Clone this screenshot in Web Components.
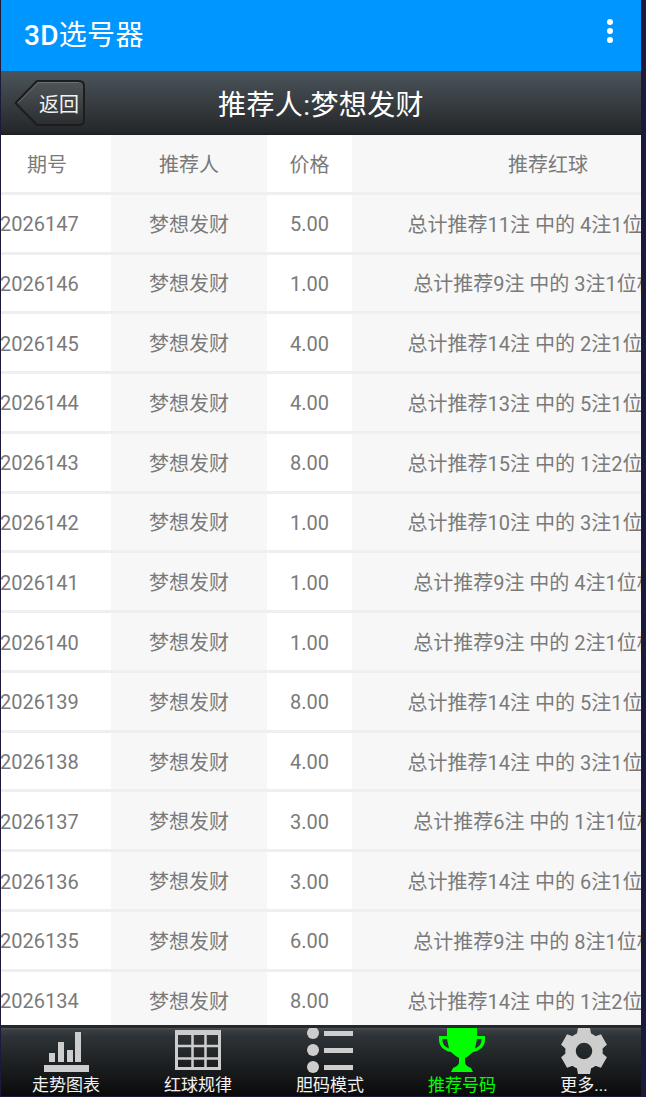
<!DOCTYPE html>
<html>
<head>
<meta charset="utf-8">
<title>3D选号器</title>
<style>
  html, body { margin: 0; height: 100%; background: #1b1a3a; overflow: hidden; }
  body { font-family: Roboto, "Noto Sans CJK SC", sans-serif; }
  lotto-app { height: 1097px; }
</style>
</head>
<body>
<lotto-app>
  <lotto-appbar slot="top">选号器</lotto-appbar>
  <lotto-subbar slot="top">推荐人:梦想发财</lotto-subbar>
  <record-table></record-table>
  <tab-bar slot="bottom">
    <tab-item label="走势图表">
      <svg width="46" height="46" viewBox="0 0 46 46" fill="#cdcdcd">
        <rect x="1" y="37" width="45" height="7"/>
        <rect x="6" y="25" width="6" height="9"/>
        <rect x="15" y="14" width="6" height="20"/>
        <rect x="24" y="22" width="6" height="12"/>
        <rect x="32" y="4" width="6" height="30"/>
      </svg>
    </tab-item>
    <tab-item label="红球规律">
      <svg width="46" height="46" viewBox="0 0 46 46" fill="none" stroke="#cdcdcd">
        <rect x="1.500" y="3.500" width="43" height="37" stroke-width="3"/>
        <path d="M2 5.500H44" stroke-width="3"/>
        <path d="M17.500 4V41M30.500 4V41M2 18H44M2 30.500H44" stroke-width="2.500"/>
      </svg>
    </tab-item>
    <tab-item label="胆码模式">
      <svg width="46" height="46" viewBox="0 0 46 46" fill="#cdcdcd">
        <circle cx="6" cy="5" r="6"/>
        <circle cx="6" cy="22" r="6"/>
        <circle cx="6" cy="39" r="6"/>
        <rect x="17" y="3" width="29" height="5"/>
        <rect x="17" y="20" width="29" height="5"/>
        <rect x="17" y="37" width="29" height="5"/>
      </svg>
    </tab-item>
    <tab-item label="推荐号码" active>
      <svg width="46" height="46" viewBox="0 0 46 46">
        <path d="M8 0H38V8H46V12C46 18 41 23 34 24C31 27 28 29 26 30V35C27 38 30 39 32 40L34 44H12L14 40C16 39 19 38 20 35V30C18 29 15 27 12 24C5 23 0 18 0 12V8H8ZM8 11H3.500V12C3.500 16 6 19 10 20.500ZM38 11L36 20.500C40 19 42.500 16 42.500 12V11Z" fill="#00ff00" fill-rule="evenodd"/>
      </svg>
    </tab-item>
    <tab-item label="更多...">
      <svg width="46" height="46" viewBox="-23 -23 46 46" fill="#cdcdcd">
        <path d="M-6 -23H6L8 -12H-8Z"/>
        <path d="M-6 -23H6L8 -12H-8Z" transform="rotate(60)"/>
        <path d="M-6 -23H6L8 -12H-8Z" transform="rotate(120)"/>
        <path d="M-6 -23H6L8 -12H-8Z" transform="rotate(180)"/>
        <path d="M-6 -23H6L8 -12H-8Z" transform="rotate(240)"/>
        <path d="M-6 -23H6L8 -12H-8Z" transform="rotate(300)"/>
        <circle r="13.500" fill="none" stroke="#cdcdcd" stroke-width="10.500"/>
      </svg>
    </tab-item>
  </tab-bar>
</lotto-app>

<script>
/* Outer frame: fixed bars on top and bottom, clipped content between */
class LottoApp extends HTMLElement {
  constructor() {
    super()
    this.attachShadow({ mode: 'open' })
    this.shadowRoot.innerHTML = `
      <style>
        :host { display: flex; flex-direction: column; width: 640px; margin-left: 1px; }
        main { flex: 1; min-height: 0; overflow: hidden; background: #fff; }
      </style>
      <slot name="top"></slot>
      <main><slot></slot></main>
      <slot name="bottom"></slot>`
  }
}

class LottoAppbar extends HTMLElement {
  constructor() {
    super()
    this.attachShadow({ mode: 'open' })
    this.shadowRoot.innerHTML = `
      <style>
        :host {
          display: flex; align-items: center; justify-content: space-between;
          height: 71px; box-sizing: border-box; padding: 0 28px 9px 23px;
          background: #0096ff; color: #fff; font-size: 28px;
        }
        .name { padding-top: 4px; letter-spacing: .3px; }
        b { font-weight: 500; }
        .dots { display: flex; flex-direction: column; gap: 2.6px; }
        .dots i { width: 6px; height: 6px; border-radius: 50%; background: #fff; }
      </style>
      <span class="name"><b>3D</b><slot></slot></span>
      <div class="dots"><i></i><i></i><i></i></div>`
  }
}

class LottoSubbar extends HTMLElement {
  constructor() {
    super()
    this.attachShadow({ mode: 'open' })
    this.shadowRoot.innerHTML = `
      <style>
        :host {
          display: grid; grid-template-columns: 1fr auto 1fr; align-items: center;
          height: 64px; box-sizing: border-box;
          background: linear-gradient(#4b555b, #25272a 95%, #1d1e20);
          color: #fff; font-size: 28px;
        }
        .back {
          position: relative; width: 72px; height: 48px; margin-left: 13px;
          display: flex; align-items: center; justify-content: flex-end;
          box-sizing: border-box; padding: 0 7px 0 0; font-size: 20px; color: #f2f2f2;
        }
        .back svg { position: absolute; left: 0; top: 0; }
        .back span { position: relative; }
        .title { letter-spacing: .4px; }
      </style>
      <div class="back">
        <svg width="72" height="48" viewBox="0 0 72 48">
          <defs>
            <linearGradient id="bk" x1="0" y1="0" x2="0" y2="1">
              <stop offset="0" stop-color="#4f565a"/>
              <stop offset="1" stop-color="#2b2d2f"/>
            </linearGradient>
          </defs>
          <path d="M1.500 24L23 2H65Q70 2 70 7V41Q70 46 65 46H23Z" fill="url(#bk)" stroke="#1b1d1e" stroke-width="2" stroke-linejoin="round"/>
          <path d="M4 24L24 3.500H65" fill="none" stroke="#6a7175" stroke-width="1"/>
        </svg>
        <span>返回</span>
      </div>
      <div class="title"><slot></slot></div>
      <div></div>`
  }
}

const COLS = '110px 156px 85px 392px'

/* One line of the table, four cells; header rows use the same grid */
class RecordRow extends HTMLElement {
  constructor() {
    super()
    this.attachShadow({ mode: 'open' })
    this.shadowRoot.innerHTML = `
      <style>
        :host {
          display: grid; grid-template-columns: ${COLS};
          height: 59.77px; box-sizing: border-box;
          border-bottom: 3px solid #efefef;
          color: #7a7a7a; font-size: 20px; white-space: nowrap;
        }
        div { display: flex; align-items: center; justify-content: center; }
        .even { background: #f7f7f7; }
        .issue { justify-content: flex-start; text-indent: -1px; }
        .num { padding-top: 2px; }
        .balls { padding-right: 6px; }
        :host([head]) .issue { padding-left: 27px; }
        :host([head]) .num { padding-top: 0; }
        :host([head]) .balls { padding-right: 0; }
      </style>
      <div class="issue num"></div>
      <div class="even"></div>
      <div class="num"></div>
      <div class="even balls"></div>`
  }

  connectedCallback() {
    var cells = this.shadowRoot.querySelectorAll('div')
    var names = ['issue', 'person', 'price', 'balls']
    for (var i = 0; i < 4; i++) {
      cells[i].textContent = this.getAttribute(names[i])
    }
  }
}

class RecordTable extends HTMLElement {
  constructor() {
    super()
    this.attachShadow({ mode: 'open' })
    this.shadowRoot.innerHTML = `
      <style>:host { display: block; width: 743px; }</style>`
  }

  connectedCallback() {
    var data = [
      [147, '5.00', 11, '4注1位'], [146, '1.00', 9, '3注1位'], [145, '4.00', 14, '2注1位'],
      [144, '4.00', 13, '5注1位'], [143, '8.00', 15, '1注2位'], [142, '1.00', 10, '3注1位'],
      [141, '1.00', 9, '4注1位'], [140, '1.00', 9, '2注1位'], [139, '8.00', 14, '5注1位'],
      [138, '4.00', 14, '3注1位'], [137, '3.00', 6, '1注1位'], [136, '3.00', 14, '6注1位'],
      [135, '6.00', 9, '8注1位'], [134, '8.00', 14, '1注2位']
    ]

    var head = document.createElement('record-row')
    head.setAttribute('head', '')
    head.setAttribute('issue', '期号')
    head.setAttribute('person', '推荐人')
    head.setAttribute('price', '价格')
    head.setAttribute('balls', '推荐红球')
    this.shadowRoot.appendChild(head)

    data.forEach(d => {
      var row = document.createElement('record-row')
      row.setAttribute('issue', '2026' + d[0])
      row.setAttribute('person', '梦想发财')
      row.setAttribute('price', d[1])
      row.setAttribute('balls', '总计推荐' + d[2] + '注 中的 ' + d[3] + '相同')
      this.shadowRoot.appendChild(row)
    })
  }
}

class TabBar extends HTMLElement {
  constructor() {
    super()
    this.attachShadow({ mode: 'open' })
    this.shadowRoot.innerHTML = `
      <style>
        :host {
          display: grid; grid-template-columns: repeat(4, 132px) 1fr;
          height: 71px; box-sizing: border-box;
          border-top: 3px solid #25282a; margin-bottom: 1px;
          background: linear-gradient(#4c5357 0, #393f43 2px, #2d3337 12%, #0a0a0a 100%);
        }
      </style>
      <slot></slot>`
  }
}

class TabItem extends HTMLElement {
  constructor() {
    super()
    this.attachShadow({ mode: 'open' })
    this.shadowRoot.innerHTML = `
      <style>
        :host {
          display: flex; flex-direction: column; align-items: center; padding-right: 2px;
          color: #f2f2f2; font-size: 17px; line-height: 22px;
        }
        :host([active]) { color: #00ff00; }
        ::slotted(svg) { display: block; }
      </style>
      <slot></slot>
      <span></span>`
  }

  connectedCallback() {
    this.shadowRoot.querySelector('span').textContent = this.getAttribute('label')
  }
}

customElements.define('lotto-app', LottoApp)
customElements.define('lotto-appbar', LottoAppbar)
customElements.define('lotto-subbar', LottoSubbar)
customElements.define('record-row', RecordRow)
customElements.define('record-table', RecordTable)
customElements.define('tab-bar', TabBar)
customElements.define('tab-item', TabItem)
</script>
</body>
</html>
